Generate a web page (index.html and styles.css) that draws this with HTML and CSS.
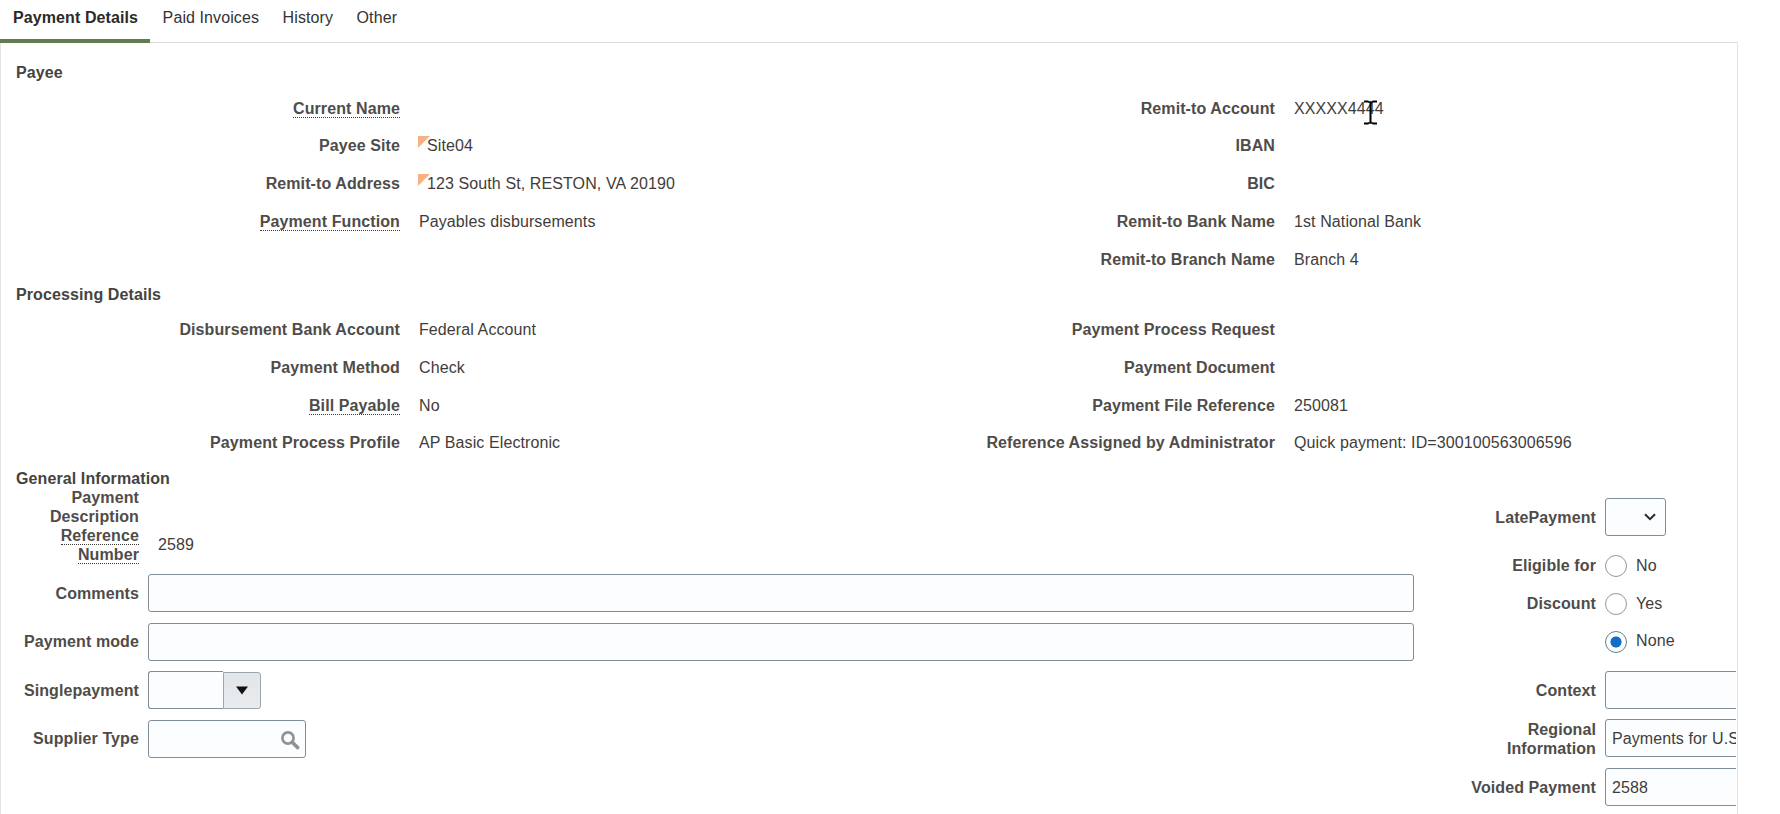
FILE: index.html
```html
<!DOCTYPE html>
<html lang="en">
<head>
<meta charset="utf-8">
<title>Payment Details</title>
<link rel="stylesheet" href="styles.css">
</head>
<body>
<nav class="tabs">
  <div class="tab tab-active">Payment Details</div>
  <div class="tab">Paid Invoices</div>
  <div class="tab">History</div>
  <div class="tab">Other</div>
</nav>
<main class="panel">
  <h2 class="section-head head-payee">Payee</h2>
  <div class="fields">
    <div class="label"><span class="help">Current Name</span></div><div class="value"></div>
    <div class="label">Remit-to Account</div><div class="value">XXXXX4444</div>
    <div class="label">Payee Site</div><div class="value noted">Site04</div>
    <div class="label">IBAN</div><div class="value"></div>
    <div class="label">Remit-to Address</div><div class="value noted">123 South St, RESTON, VA 20190</div>
    <div class="label">BIC</div><div class="value"></div>
    <div class="label"><span class="help">Payment Function</span></div><div class="value">Payables disbursements</div>
    <div class="label">Remit-to Bank Name</div><div class="value">1st National Bank</div>
    <div class="label"></div><div class="value"></div>
    <div class="label">Remit-to Branch Name</div><div class="value">Branch 4</div>
  </div>

  <h2 class="section-head head-processing">Processing Details</h2>
  <div class="fields">
    <div class="label">Disbursement Bank Account</div><div class="value">Federal Account</div>
    <div class="label">Payment Process Request</div><div class="value"></div>
    <div class="label">Payment Method</div><div class="value">Check</div>
    <div class="label">Payment Document</div><div class="value"></div>
    <div class="label"><span class="help">Bill Payable</span></div><div class="value">No</div>
    <div class="label">Payment File Reference</div><div class="value">250081</div>
    <div class="label">Payment Process Profile</div><div class="value">AP Basic Electronic</div>
    <div class="label">Reference Assigned by Administrator</div><div class="value">Quick payment: ID=300100563006596</div>
  </div>

  <h2 class="section-head head-general">General Information</h2>
  <div class="form">
    <div class="form-left">
      <div class="form-label">Payment<br>Description<br><span class="help">Reference</span><br><span class="help">Number</span></div>
      <div class="form-value">2589</div>
      <div class="form-label">Comments</div>
      <div class="input"></div>
      <div class="form-label">Payment mode</div>
      <div class="input"></div>
      <div class="form-label">Singlepayment</div>
      <div class="combo">
        <div class="input combo-field"></div>
        <div class="combo-button"><svg class="icon-caret" width="14" height="9" viewBox="0 0 14 9"><path d="M1 0.5h12L7 8.5z" fill="#111"/></svg></div>
      </div>
      <div class="form-label">Supplier Type</div>
      <div class="input lookup">
        <svg class="icon-search" width="20" height="20" viewBox="0 0 20 20"><circle cx="8" cy="8" r="5.6" fill="none" stroke="#8e9296" stroke-width="2.6"/><path d="M12.2 12.2l5.4 5.4" stroke="#8e9296" stroke-width="3.6" stroke-linecap="round"/></svg>
      </div>
    </div>
    <div class="form-right">
      <div class="form-label">LatePayment</div>
      <div class="input select"><svg width="12" height="8" viewBox="0 0 12 8"><path d="M1 1.2l5 5 5-5" fill="none" stroke="#2a2a2a" stroke-width="2"/></svg></div>
      <div class="form-label radio-label">Eligible for<br>Discount</div>
      <div class="radios">
        <div class="radio-row"><span class="radio"></span><span class="radio-text">No</span></div>
        <div class="radio-row"><span class="radio"></span><span class="radio-text">Yes</span></div>
        <div class="radio-row"><span class="radio radio-on"></span><span class="radio-text">None</span></div>
      </div>
      <div class="form-label">Context</div>
      <div class="input input-wide"></div>
      <div class="form-label">Regional<br>Information</div>
      <div class="input input-wide">Payments for U.S</div>
      <div class="form-label">Voided Payment</div>
      <div class="input input-wide">2588</div>
    </div>
  </div>
</main>
<svg class="cursor" width="15" height="25" viewBox="0 0 15 25"><path d="M1 1.5h4.5M9.5 1.5H14M1 23.5h4.5M9.5 23.5H14" stroke="#000" stroke-width="2"/><path d="M5 2h5M5 23h5" stroke="#000" stroke-width="1.4"/><path d="M7.5 2v21" stroke="#000" stroke-width="2"/></svg>
</body>
</html>
```

FILE: styles.css
```css
* { box-sizing: border-box; }
html, body { margin: 0; height: 814px; overflow: hidden; background: #fff; }
body {
  position: relative;
  font-family: "Liberation Sans", Arial, sans-serif;
  font-size: 16px;
  line-height: 19px;
  letter-spacing: 0.1px;
  color: #3d3a38;
}

.tabs { display: flex; height: 43px; width: 1738px; border-bottom: 1px solid #dcdcdc; }
.tab { height: 43px; padding: 8px 11px 0 12.5px; color: #333; }
.tab-active { padding: 8px 12px 0 13px; font-weight: 700; color: #2c2a28; border-bottom: 4px solid #5f7d4f; }

.panel {
  width: 1738px;
  height: 790px;
  border: 1px solid #dfe4e8;
  border-top: 0;
  border-top-right-radius: 3px;
  overflow: hidden;
}

.section-head { margin: 0; padding-left: 15px; font-size: 16px; line-height: 19px; font-weight: 700; color: #454340; }
.head-payee { padding-top: 20px; padding-bottom: 7.3px; }
.head-processing { padding-top: 6.95px; padding-bottom: 6.8px; }
.head-general { padding-top: 7.2px; }

.fields {
  display: grid;
  grid-template-columns: 399px 437px 400px 1fr;
  grid-auto-rows: 37.75px;
  column-gap: 19px;
  align-items: center;
}
.label { text-align: right; font-weight: 700; color: #4f4c4a; }
.value { position: relative; color: #3f3d3b; min-height: 19px; }
.noted { padding-left: 8px; }
.noted::before {
  content: "";
  position: absolute;
  left: -1px;
  top: 0;
  border-style: solid;
  border-width: 12px 12px 0 0;
  border-color: #f8b183 transparent transparent transparent;
}
.help { border-bottom: 1px dotted #3d3a38; }

.form { display: flex; }
.form-left {
  width: 1413px;
  flex: none;
  display: grid;
  grid-template-columns: 138px 1266px;
  grid-template-rows: 75.9px repeat(4, 38px);
  column-gap: 9px;
  row-gap: 10.5px;
  align-items: center;
}
.form-right {
  width: 322px;
  flex: none;
  overflow: hidden;
  padding-top: 10px;
  display: grid;
  grid-template-columns: 182px 1fr;
  grid-template-rows: 38px 114px repeat(3, 38px);
  column-gap: 9px;
  row-gap: 10.5px;
  align-items: center;
}
.form-label { text-align: right; font-weight: 700; color: #4f4c4a; }
.form-right .form-label { padding-top: 2px; }
.form-value { align-self: end; padding: 0 0 10px 10px; color: #3f3d3b; }

.input {
  height: 38px;
  background: #fcfdfe;
  border: 1px solid #7f8e9b;
  border-radius: 3px;
  padding: 8px 7px 8px 6px;
  color: #3f3d3b;
  white-space: nowrap;
}
.input-wide { width: 200px; padding-top: 9px; }
.combo { display: flex; width: 113px; }
.combo-field { width: 75px; border-radius: 3px 0 0 3px; border-right: 0; }
.combo-button {
  width: 38px;
  height: 37px;
  margin-top: 1px;
  display: flex;
  align-items: center;
  justify-content: center;
  border: 1px solid #9aa6b0;
  border-radius: 0 3px 3px 0;
  background: linear-gradient(#e3e6e9, #e9ecee);
}
.lookup { width: 158px; display: flex; justify-content: flex-end; align-items: center; padding: 2px 5px 0 0; }
.select { width: 61px; display: flex; justify-content: flex-end; align-items: center; padding: 0 9px 0 0; }

.radio-label { line-height: 38px; align-self: start; }
.form-right .radio-label { padding-top: 0; margin-top: 1px; }
.radios { display: flex; flex-direction: column; align-self: start; margin-top: 1px; }
.radio-row { height: 38px; display: flex; align-items: center; gap: 9px; }
.radio {
  width: 22px;
  height: 22px;
  flex: none;
  border: 1px solid #8e9aa4;
  border-radius: 50%;
  background: #fff;
}
.radio-on { border-color: #5a7f9c; background: radial-gradient(circle, #0f6fc6 0 5.2px, #fff 5.9px); }
.radio-text { position: relative; top: -1px; color: #3f3d3b; }
.radio-on + .radio-text { top: -2px; }

.cursor { position: absolute; left: 1363px; top: 100px; }
```
